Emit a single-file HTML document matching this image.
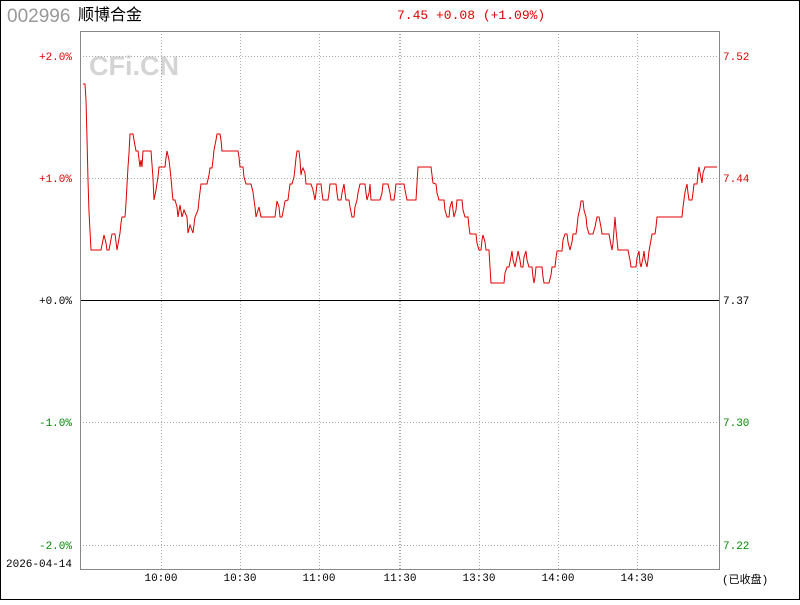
<!DOCTYPE html>
<html><head><meta charset="utf-8"><style>
html,body{margin:0;padding:0;background:#fff;}
body{width:800px;height:600px;overflow:hidden;position:relative;}
.m{font-family:"Liberation Mono","Noto Sans CJK SC",monospace;}
.s{font-family:"Liberation Sans","Noto Sans CJK SC",sans-serif;}
</style></head><body>
<svg width="800" height="600" viewBox="0 0 800 600" xmlns="http://www.w3.org/2000/svg">
<rect x="0.5" y="0.5" width="799" height="599" fill="#fff" stroke="#000"/>
<text class="s" x="7" y="22" font-size="19" fill="#999">002996</text>
<text class="s" x="78" y="20" font-size="16" fill="#000">顺博合金</text>
<text class="m" x="397" y="19" font-size="13" fill="#d00">7.45 +0.08 (+1.09%)</text>
<text class="s" x="89" y="75" font-weight="bold" font-size="27" fill="#d4d4d4">CFi.CN</text>
<g stroke="#aaa" stroke-dasharray="1,2" stroke-width="1">
<line x1="161.5" y1="31" x2="161.5" y2="569"/><line x1="240.5" y1="31" x2="240.5" y2="569"/>
<line x1="319.5" y1="31" x2="319.5" y2="569"/><line x1="399.5" y1="31" x2="399.5" y2="569"/>
<line x1="400.5" y1="31" x2="400.5" y2="569"/><line x1="479.5" y1="31" x2="479.5" y2="569"/>
<line x1="558.5" y1="31" x2="558.5" y2="569"/><line x1="637.5" y1="31" x2="637.5" y2="569"/>
<line x1="80" y1="56.5" x2="720" y2="56.5"/><line x1="80" y1="178.5" x2="720" y2="178.5"/>
<line x1="80" y1="422.5" x2="720" y2="422.5"/><line x1="80" y1="545.5" x2="720" y2="545.5"/>
</g>
<line x1="80" y1="300.5" x2="720" y2="300.5" stroke="#000"/>
<rect x="80.5" y="31.5" width="639" height="538" fill="none" stroke="#888"/>
<polyline fill="none" stroke="#d00" stroke-width="1" points="83,84 85,84 86,100 87,138 88,180 89,212 90,231 91,250 101,250 104,235 106,243 107,250 109,250 112,234 115,234 116,242 117,250 120,233 121,223 122,217 125,217 126,203 127,185 128,167 129,153 130,134 133,134 134,140 136,151 138,151 140,167 141,160 142,167 143,151 151,151 153,178 154,200 156,190 157,183 158,177 159,167 165,167 166,158 167,151 169,160 171,178 172,190 173,200 175,200 177,207 178,217 180,205 182,217 184,210 187,217 188,233 190,225 193,233 195,217 198,210 199,200 201,184 207,184 209,175 210,168 212,168 213,160 214,150 216,140 217,134 220,134 221,140 222,151 238,151 239,157 240,167 243,167 244,177 246,184 251,184 253,192 254,200 255,207 256,217 259,207 261,217 275,217 277,201 279,207 280,217 282,217 284,207 285,201 288,200 289,192 290,184 292,184 294,177 295,168 296,158 297,151 299,151 300,160 301,175 302,170 303,168 305,173 306,184 311,184 313,190 315,200 316,193 317,184 321,184 322,193 323,200 328,200 329,193 330,184 336,184 337,193 338,200 341,200 342,193 344,184 345,193 346,200 349,200 350,207 352,217 354,217 355,207 357,200 358,193 360,184 365,184 366,193 367,200 369,193 370,184 371,200 380,200 382,193 383,184 388,184 390,193 391,200 394,200 395,193 396,184 400,184 404,184 405,190 407,200 416,200 417,183 418,167 431,167 432,175 433,183 436,184 437,193 439,200 444,200 445,210 447,217 449,217 450,207 452,201 453,210 454,217 456,210 457,200 462,200 463,210 465,217 468,217 469,227 470,234 476,234 477,243 479,250 481,250 482,240 483,235 485,242 486,250 489,250 490,267 491,283 504,283 505,273 507,267 509,267 511,257 512,251 513,260 515,267 517,257 518,251 520,260 521,267 523,267 524,257 526,251 527,260 529,267 532,267 533,277 534,283 535,277 536,267 542,267 543,277 544,283 549,283 551,275 552,267 555,267 556,258 557,251 562,251 563,240 565,234 567,234 568,242 570,250 572,242 573,234 576,234 577,227 578,217 580,208 581,201 583,201 584,210 586,217 587,227 589,234 593,234 595,227 597,217 599,217 601,227 602,234 609,234 611,245 612,250 613,243 615,217 616,230 618,250 628,250 630,260 631,267 636,267 637,258 639,251 640,263 641,267 643,258 644,251 645,260 647,267 648,260 649,251 651,240 652,234 655,234 656,227 657,217 682,217 683,207 685,192 687,184 688,193 689,200 692,200 693,193 694,184 697,184 698,173 699,167 701,178 702,183 703,173 705,167 717,167"/>
<g class="m" font-size="11">
<text x="72" y="60" text-anchor="end" fill="#d00">+2.0%</text>
<text x="72" y="182" text-anchor="end" fill="#d00">+1.0%</text>
<text x="72" y="304" text-anchor="end" fill="#000">+0.0%</text>
<text x="72" y="426" text-anchor="end" fill="#080">-1.0%</text>
<text x="72" y="549" text-anchor="end" fill="#080">-2.0%</text>
<text x="723" y="60" fill="#d00">7.52</text>
<text x="723" y="182" fill="#d00">7.44</text>
<text x="723" y="304" fill="#000">7.37</text>
<text x="723" y="426" fill="#080">7.30</text>
<text x="723" y="549" fill="#080">7.22</text>
<text x="6" y="567" fill="#000">2026-04-14</text>
<g text-anchor="middle" fill="#000">
<text x="161" y="581">10:00</text><text x="240" y="581">10:30</text><text x="319" y="581">11:00</text>
<text x="400" y="581">11:30</text><text x="479" y="581">13:30</text><text x="558" y="581">14:00</text>
<text x="637" y="581">14:30</text>
</g>
<text x="722" y="583" fill="#000">(已收盘)</text>
</g>
</svg>
</body></html>
